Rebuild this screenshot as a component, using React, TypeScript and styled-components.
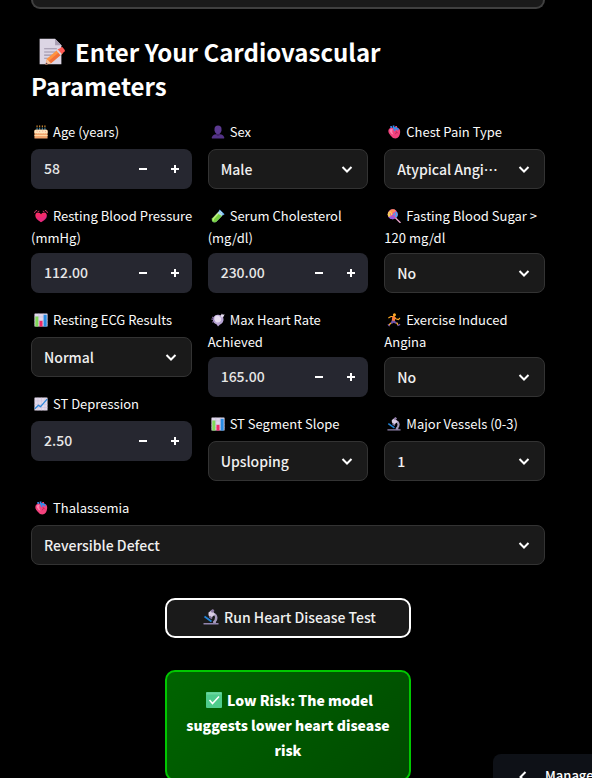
import React, { useState } from "react";
import styled, { createGlobalStyle, css } from "styled-components";

const sans = `"Noto Sans CJK KR", "Noto Sans", sans-serif`;

const GlobalStyle = createGlobalStyle`
  *, *::before, *::after { box-sizing: border-box; }
  body { margin: 0; background: #000; color: #fafafa; font-family: ${sans}; }
`;

/* ---------- icons ---------- */

const Glyph = styled.svg<{ $size: number }>`
  display: inline-block;
  width: ${(p) => p.$size}px;
  height: ${(p) => p.$size}px;
  margin: 0 5px 0 3px;
  vertical-align: -2px;
`;

const HeadingGlyph = styled(Glyph)`
  margin: 0 10px 0 5px;
  vertical-align: -4px;
`;

type IconName =
  | "memo" | "cake" | "person" | "heart" | "beating" | "tube" | "lollipop"
  | "bars" | "trend" | "pulse" | "runner" | "microscope" | "check";

const drawings: Record<IconName, React.ReactNode> = {
  memo: (
    <>
      <path d="M4 2h17l7 7v21H4z" fill="#dcd5e4" />
      <path d="M21 2v7h7z" fill="#a99fb3" />
      <path d="M9 13h14M9 16.500h14M9 20h10M9 23.500h6" stroke="#9c92a8" strokeWidth="1.200" />
      <path d="M12 24 25 13l4.500 5-13 11-6 1.500z" fill="#ff9340" />
      <path d="m14 26.500 13-11 2.500 2.500-13 11z" fill="#f2703a" />
      <path d="m24 14 3.500-2.500q1.500-1 2.500.5l1.500 2q1 1.500-.5 2.500l-2.500 2z" fill="#ff5a55" />
      <path d="m22.500 15 1.500-1.200 4.500 5-1.500 1.200z" fill="#dcd5e4" />
      <path d="m10.500 30.500 1.500-6 4.500 4.500z" fill="#f6c5a2" />
      <path d="m10.500 30.500.6-2.500 2 1.800z" fill="#54394d" />
    </>
  ),
  cake: (
    <>
      <path d="M7 6v8M13 6v8M19 6v8M25 6v8" stroke="#3ba4d8" strokeWidth="2" />
      <path d="M7 1v4M13 1v4M19 1v4M25 1v4" stroke="#f9a33b" strokeWidth="2.200" />
      <path d="M1 14q0-3 3-3h24q3 0 3 3v16q0 1-1 1H2q-1 0-1-1z" fill="#f2a46c" />
      <path d="M1 14q0-3 3-3h24q3 0 3 3v4q-2 3-5 0-2.500 3-5 0-2.500 3-5 0-2.500 3-5 0-2.500 3-5 0-3 2-5 0z" fill="#ffe6bd" />
      <path d="M1 24h30" stroke="#ffd9a5" strokeWidth="2.500" />
      <path d="M6 14h2m4 1h2m5-1h2m4 1h2" stroke="#ef6b6b" strokeWidth="1.500" />
    </>
  ),
  person: (
    <>
      <path d="M2 31v-3q1-6 10-7h8q9 1 10 7v3z" fill="#533286" />
      <path d="M12 17h8v6q-4 4-8 0z" fill="#412369" />
      <path d="M8 9q0-8 8-8t8 8v3q-1 8-8 9-7-1-8-9z" fill="#5b3990" />
    </>
  ),
  heart: (
    <>
      <path d="M13 1h4v8h-4zM7 3l4-1 2 8-4 1z" fill="#3a8df0" />
      <path d="M19 2h4l-1 8h-4z" fill="#f33b6b" />
      <path d="M3 14q0-8 8-8 3 0 5 2 3-3 8-2 7 2 6 11-1 12-11 14-6 0-11-7-5-5-5-10z" fill="#f3427d" />
      <path d="M6 12q2-5 7-3-3 6 2 13-8-2-9-10z" fill="#ff82ae" />
      <path d="M15 5q8-2 12 4l-2 4q-3-5-7-3l2 3-3 1q-4-4-2-9z" fill="#308ff0" />
      <path d="m20 14 5 5m-3-3-3 5" stroke="#ba265c" strokeWidth="2" fill="none" />
    </>
  ),
  beating: (
    <>
      <path d="M16 30Q3 23 3 15q0-7 6-7 5 0 7 4 2-4 7-4 6 0 6 7 0 8-13 15z" fill="#f52b68" />
      <path d="M16 30Q5 23 8 17q13 6 20-6 7 10-12 19z" fill="#d52995" opacity=".45" />
      <path d="M1 9q1-5 6-6M8 7q1-2 4-2M31 9q-1-5-6-6M24 7q-1-2-4-2" stroke="#f0447c" strokeWidth="2" fill="none" />
    </>
  ),
  tube: (
    <>
      <path d="m20 3 9 9-17 17q-4 3-8 0-4-4-1-8z" fill="#b4dbe9" />
      <path d="m15 10 10 6-13 13q-4 3-8 0-4-4-1-8z" fill="#75cf43" />
      <path d="m16 11-10 11q-2 3 0 4" stroke="#c8f37a" strokeWidth="3" fill="none" />
      <path d="m20 1 11 11-3 2L18 4z" fill="#5dacee" />
      <path d="m21 5 5 5" stroke="#d8f2ff" strokeWidth="2" />
    </>
  ),
  lollipop: (
    <>
      <path d="m19 20 11 11" stroke="#e7a3c9" strokeWidth="3" strokeLinecap="round" />
      <circle cx="13" cy="12" r="11.500" fill="#e853a5" />
      <path d="M13 12Q5 10 7 3 14-2 20 3z" fill="#ff9256" />
      <path d="M13 12Q17 5 23 7q4 8-2 13z" fill="#47a9f4" />
      <path d="M13 12q7 5 3 11-8 2-13-5z" fill="#8c5de7" />
      <path d="M13 12Q9 19 3 17q-4-8 4-13z" fill="#f5d554" />
      <path d="M13 12q0-5 5-4 5 7-4 9-8 0-7-8" stroke="#f24992" strokeWidth="2" fill="none" />
    </>
  ),
  bars: (
    <>
      <rect x="1" y="1" width="30" height="30" rx="1" fill="#e0d8ec" />
      <path d="M1 9h30M1 17h30M1 24h30M11 1v30M21 1v30" stroke="#c3b5d8" />
      <path d="M3 8h7v23H3z" fill="#80d957" />
      <path d="M12.500 18h7v13h-7z" fill="#ef2966" />
      <path d="M22 4h7v27h-7z" fill="#288be2" />
    </>
  ),
  trend: (
    <>
      <rect x="1" y="1" width="30" height="30" rx="1" fill="#e3daec" />
      <path d="M1 9h30M1 17h30M1 24h30M9 1v30M17 1v30M25 1v30" stroke="#c6b8d9" />
      <path d="m2 27 8-8 5 3 8-9 7-8" stroke="#2b86d9" strokeWidth="3" fill="none" />
    </>
  ),
  pulse: (
    <>
      <path d="M6 9q4-6 11-5 7 0 11 6 2 6-1 11-3 4-7 6l-4 4-3-5q-6-2-8-6-2-6 1-11z" fill="#b7a4d3" />
      <path d="M8 9q6-6 12-1 5 3 3 9-4 7-11 4-6-4-4-12z" fill="#e6dcef" />
      <path d="M1 14h6M3 9l4 3M3 21l5-3" stroke="#8c73ac" strokeWidth="2.500" />
      <path d="M22 6 25 1l2 3 4-1-2 5-4 3z" fill="#e6dcef" />
    </>
  ),
  runner: (
    <>
      <circle cx="17" cy="4" r="3.500" fill="#ffad25" />
      <path d="M4 11 9 8h7l4 5 6 2 3-3" stroke="#ffad25" strokeWidth="2.500" fill="none" strokeLinecap="round" />
      <path d="m12 7 7 2-1 10-7-1z" fill="#f77a3f" />
      <path d="m11 17 7 1 5 4-2 3-6-3-4 3-3-2z" fill="#7355aa" />
      <path d="m22 22 3 5M9 23l-5 5" stroke="#ffad25" strokeWidth="3" fill="none" />
      <path d="m2 26 4 4m18-1 6-3" stroke="#765aac" strokeWidth="3" />
    </>
  ),
  microscope: (
    <>
      <path d="M1 28h30v3H1zM20 25h6v4h-6z" fill="#9184ad" />
      <path d="M19 7q9 1 10 10 0 7-6 11l-3-3q4-3 4-8 0-5-6-6z" fill="#a79bbc" />
      <path d="M11 7 18 2l6 9-7 6q-7-1-6-10z" fill="#dacde5" />
      <path d="m15 3 5-3 3 4-5 4z" fill="#8f7ca6" />
      <path d="m13 15 5 4" stroke="#8878a0" strokeWidth="4" />
      <path d="m3 15 14 10" stroke="#2184d8" strokeWidth="3.500" />
    </>
  ),
  check: (
    <>
      <rect width="32" height="32" rx="2" fill="#4ecb8c" />
      <path d="M1 1h30v4H1z" fill="#6bd69e" />
      <path d="m7 16 6 7L26 9" stroke="#fff" strokeWidth="3" fill="none" />
    </>
  ),
};

const Icon = ({ name, size = 14 }: { name: IconName; size?: number }) => (
  <Glyph $size={size} viewBox="0 0 32 32" aria-hidden="true">{drawings[name]}</Glyph>
);

/* ---------- layout ---------- */

const Page = styled.main`
  height: 100vh;
  overflow-y: auto;
  scrollbar-width: none;
  padding: 0 47px 0 31px;
`;

const PreviousCard = styled.div`
  height: 9px;
  background: #1a1a1a;
  border: 2px solid #404040;
  border-top: 0;
  border-radius: 0 0 10px 10px;
`;

const Heading = styled.h2`
  margin: 26px 0 18px;
  padding-right: 48px;
  font-size: 24px;
  line-height: 34px;
  font-weight: 600;
  color: #fff;
`;

const Form = styled.form`
  display: flex;
  flex-direction: column;
  gap: 16px;
`;

const Columns = styled.div`
  display: grid;
  grid-template-columns: repeat(3, minmax(0, 1fr));
  gap: 16px;
`;

const Column = styled.div`
  display: flex;
  flex-direction: column;
  gap: 16px;
`;

const Field = styled.div`
  display: flex;
  flex-direction: column;
  gap: 4px;
`;

const Label = styled.label`
  min-height: 24px;
  margin-right: -4px;
  font-size: 13px;
  line-height: 22px;
  font-weight: 400;
  color: #fafafa;
`;

const controlText = css`
  font-family: ${sans};
  font-size: 14px;
  line-height: 22px;
  font-weight: 500;
  color: #f0f0f0;
`;

const SelectBox = styled.div`
  display: grid;
  align-items: center;
  height: 40px;
  background: #1a1a1a;
  border: 1px solid #333;
  border-radius: 8px;
`;

const Select = styled.select`
  ${controlText}
  grid-area: 1 / 1;
  appearance: none;
  width: 100%;
  height: 38px;
  padding: 0 44px 0 12px;
  border: 0;
  border-radius: 8px;
  background: transparent;
  text-overflow: ellipsis;
  overflow: hidden;
  white-space: nowrap;
  outline: none;
  option { background: #1a1a1a; }
`;

const Chevron = styled.svg`
  grid-area: 1 / 1;
  justify-self: end;
  width: 12px;
  height: 12px;
  margin-right: 14px;
  pointer-events: none;
`;

const NumberBox = styled.div`
  display: flex;
  align-items: stretch;
  height: 40px;
  padding-right: 1px;
  background: #262730;
  border-radius: 8px;
  overflow: hidden;
`;

const NumberInput = styled.input`
  ${controlText}
  flex: 1;
  min-width: 0;
  padding: 0 0 2px 13px;
  border: 0;
  background: transparent;
  color: #e6e6e6;
  appearance: textfield;
  outline: none;
  &::-webkit-inner-spin-button, &::-webkit-outer-spin-button { appearance: none; margin: 0; }
`;

const StepButton = styled.button`
  display: flex;
  align-items: center;
  justify-content: center;
  width: 32px;
  padding: 0;
  border: 0;
  background: transparent;
  cursor: pointer;
  svg { width: 8px; height: 8px; }
`;

const ActionRow = styled.div`
  display: flex;
  gap: 16px;
  margin-top: 17px;
`;

const Spacer = styled.div`
  flex: 1 1 calc(25% - 16px);
`;

const ActionColumn = styled.div`
  flex: 1 1 calc(50% - 16px);
  display: flex;
  flex-direction: column;
  gap: 32px;
  padding-bottom: 48px;
`;

const RunButton = styled.button`
  ${controlText}
  height: 40px;
  padding: 0 12px 2px;
  border: 2px solid #fff;
  border-radius: 10px;
  background: #1a1a1a;
  cursor: pointer;
`;

const Result = styled.div`
  padding: 16px 18px;
  border: 2px solid #00c800;
  border-radius: 10px;
  background: linear-gradient(135deg, #006400, #004b00);
  color: #fff;
  font-size: 14px;
  line-height: 25px;
  font-weight: 900;
  text-align: center;
`;

const ManageButton = styled.button`
  position: fixed;
  right: 0;
  bottom: 0;
  display: flex;
  align-items: flex-start;
  gap: 16px;
  width: 99px;
  height: 24px;
  padding: 12px 0 0 24px;
  border: 0;
  border-radius: 8px 0 0 0;
  background: #0e1117;
  color: #fff;
  font-family: ${sans};
  font-size: 13px;
  line-height: 20px;
  font-weight: 500;
  white-space: nowrap;
  overflow: hidden;
  svg { flex: none; width: 12px; height: 20px; }
`;

/* ---------- controls ---------- */

type FieldProps = { id: string; icon: IconName; label: string };

function SelectField({ id, icon, label, options, initial }: FieldProps & { options: string[]; initial: string }) {
  const [value, setValue] = useState(initial);
  return (
    <Field>
      <Label htmlFor={id}><Icon name={icon} />{label}</Label>
      <SelectBox>
        <Select id={id} value={value} onChange={(e) => setValue(e.target.value)}>
          {options.map((o) => <option key={o}>{o}</option>)}
        </Select>
        <Chevron viewBox="0 0 12 12" aria-hidden="true">
          <path d="m1.500 4 4.500 4.500L10.500 4" fill="none" stroke="#fff" strokeWidth="2" />
        </Chevron>
      </SelectBox>
    </Field>
  );
}

function NumberField({ id, icon, label, initial, step, digits }: FieldProps & { initial: string; step: number; digits: number }) {
  const [value, setValue] = useState(initial);
  const shift = (by: number) => setValue((Number(value) + by).toFixed(digits));
  return (
    <Field>
      <Label htmlFor={id}><Icon name={icon} />{label}</Label>
      <NumberBox>
        <NumberInput id={id} type="number" step="any" value={value} onChange={(e) => setValue(e.target.value)} />
        <StepButton type="button" aria-label={`Decrease ${label}`} onClick={() => shift(-step)}>
          <svg viewBox="0 0 8 8"><path d="M0 3h8v2H0z" fill="#fff" /></svg>
        </StepButton>
        <StepButton type="button" aria-label={`Increase ${label}`} onClick={() => shift(step)}>
          <svg viewBox="0 0 8 8"><path d="M0 3h3V0h2v3h3v2H5v3H3V5H0z" fill="#fff" /></svg>
        </StepButton>
      </NumberBox>
    </Field>
  );
}

export default function App() {
  return (
    <>
      <GlobalStyle />
      <Page>
        <PreviousCard />
        <Heading>
          <HeadingGlyph $size={29} viewBox="0 0 32 32" aria-hidden="true">{drawings.memo}</HeadingGlyph>
          Enter Your Cardiovascular Parameters
        </Heading>
        <Form onSubmit={(e) => e.preventDefault()}>
          <Columns>
            <Column>
              <NumberField id="age" icon="cake" label="Age (years)" initial="58" step={1} digits={0} />
              <NumberField id="bp" icon="beating" label="Resting Blood Pressure (mmHg)" initial="112.00" step={1} digits={2} />
              <SelectField id="ecg" icon="bars" label="Resting ECG Results" initial="Normal" options={["Normal", "ST-T Abnormality"]} />
              <NumberField id="st" icon="trend" label="ST Depression" initial="2.50" step={0.1} digits={2} />
            </Column>
            <Column>
              <SelectField id="sex" icon="person" label="Sex" initial="Male" options={["Male", "Female"]} />
              <NumberField id="chol" icon="tube" label="Serum Cholesterol (mg/dl)" initial="230.00" step={1} digits={2} />
              <NumberField id="rate" icon="pulse" label="Max Heart Rate Achieved" initial="165.00" step={1} digits={2} />
              <SelectField id="slope" icon="bars" label="ST Segment Slope" initial="Upsloping" options={["Upsloping", "Flat", "Downsloping"]} />
            </Column>
            <Column>
              <SelectField id="pain" icon="heart" label="Chest Pain Type" initial="Atypical Angina" options={["Typical Angina", "Atypical Angina"]} />
              <SelectField id="sugar" icon="lollipop" label="Fasting Blood Sugar > 120 mg/dl" initial="No" options={["No", "Yes"]} />
              <SelectField id="angina" icon="runner" label="Exercise Induced Angina" initial="No" options={["No", "Yes"]} />
              <SelectField id="vessels" icon="microscope" label="Major Vessels (0-3)" initial="1" options={["0", "1", "2", "3"]} />
            </Column>
          </Columns>
          <SelectField id="thal" icon="heart" label="Thalassemia" initial="Reversible Defect" options={["Normal", "Fixed Defect", "Reversible Defect"]} />
          <ActionRow>
            <Spacer />
            <ActionColumn>
              <RunButton type="submit"><Icon name="microscope" size={16} />Run Heart Disease Test</RunButton>
              <Result role="status"><Icon name="check" size={16} />Low Risk: The model suggests lower heart disease risk</Result>
            </ActionColumn>
            <Spacer />
          </ActionRow>
        </Form>
      </Page>
      <ManageButton type="button">
        <svg viewBox="0 0 12 20" aria-hidden="true">
          <path d="m8.500 6-5 5 5 5" fill="none" stroke="#fff" strokeWidth="2" />
        </svg>
        Manage app
      </ManageButton>
    </>
  );
}
